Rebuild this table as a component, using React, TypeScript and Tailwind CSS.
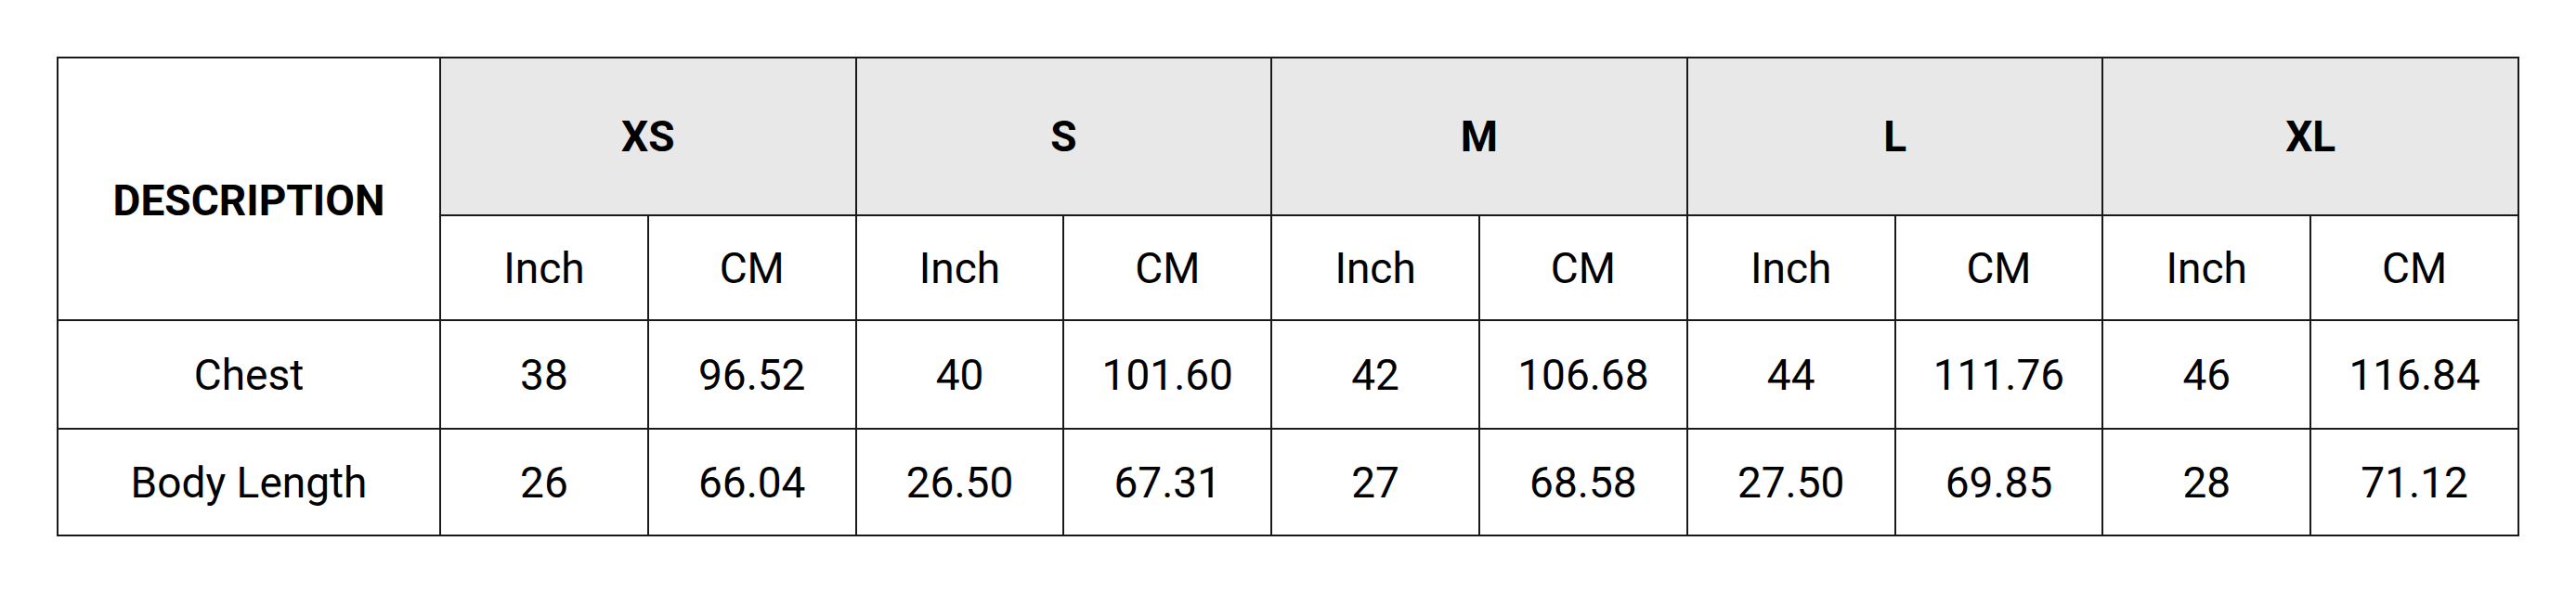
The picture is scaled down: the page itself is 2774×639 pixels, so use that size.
import React from "react";

type Size = {
  label: string;
  chest: [string, string];
  length: [string, string];
};

const sizes: Size[] = [
  { label: "XS", chest: ["38", "96.52"], length: ["26", "66.04"] },
  { label: "S", chest: ["40", "101.60"], length: ["26.50", "67.31"] },
  { label: "M", chest: ["42", "106.68"], length: ["27", "68.58"] },
  { label: "L", chest: ["44", "111.76"], length: ["27.50", "69.85"] },
  { label: "XL", chest: ["46", "116.84"], length: ["28", "71.12"] },
];

const cell = "border-2 border-[#1a1a1a] text-center align-middle";

export default function App() {
  const rows = [
    { name: "Chest", key: "chest" as const, h: "h-[117px]" },
    { name: "Body Length", key: "length" as const, h: "h-[115px]" },
  ];

  return (
    <div className="w-[2774px] h-[639px] bg-white pt-[61px] pl-[61px] text-black font-['Roboto','Liberation_Sans',sans-serif] text-[46px] leading-none">
      <table className="table-fixed border-collapse w-[2652px]">
        <colgroup>
          <col className="w-[412px]" />
          {sizes.map((s) => (
            <React.Fragment key={s.label}>
              <col />
              <col />
            </React.Fragment>
          ))}
        </colgroup>
        <thead>
          <tr className="h-[170px]">
            <th rowSpan={2} className={`${cell} font-bold pt-[24px]`}>
              DESCRIPTION
            </th>
            {sizes.map((s) => (
              <th key={s.label} colSpan={2} className={`${cell} bg-[#e8e8e8] font-bold`}>
                {s.label}
              </th>
            ))}
          </tr>
          <tr className="h-[113px]">
            {sizes.map((s) => (
              <React.Fragment key={s.label}>
                <th className={`${cell} font-normal`}>Inch</th>
                <th className={`${cell} font-normal`}>CM</th>
              </React.Fragment>
            ))}
          </tr>
        </thead>
        <tbody>
          {rows.map((r) => (
            <tr key={r.key} className={r.h}>
              <td className={cell}>{r.name}</td>
              {sizes.map((s) => (
                <React.Fragment key={s.label}>
                  <td className={cell}>{s[r.key][0]}</td>
                  <td className={cell}>{s[r.key][1]}</td>
                </React.Fragment>
              ))}
            </tr>
          ))}
        </tbody>
      </table>
    </div>
  );
}
